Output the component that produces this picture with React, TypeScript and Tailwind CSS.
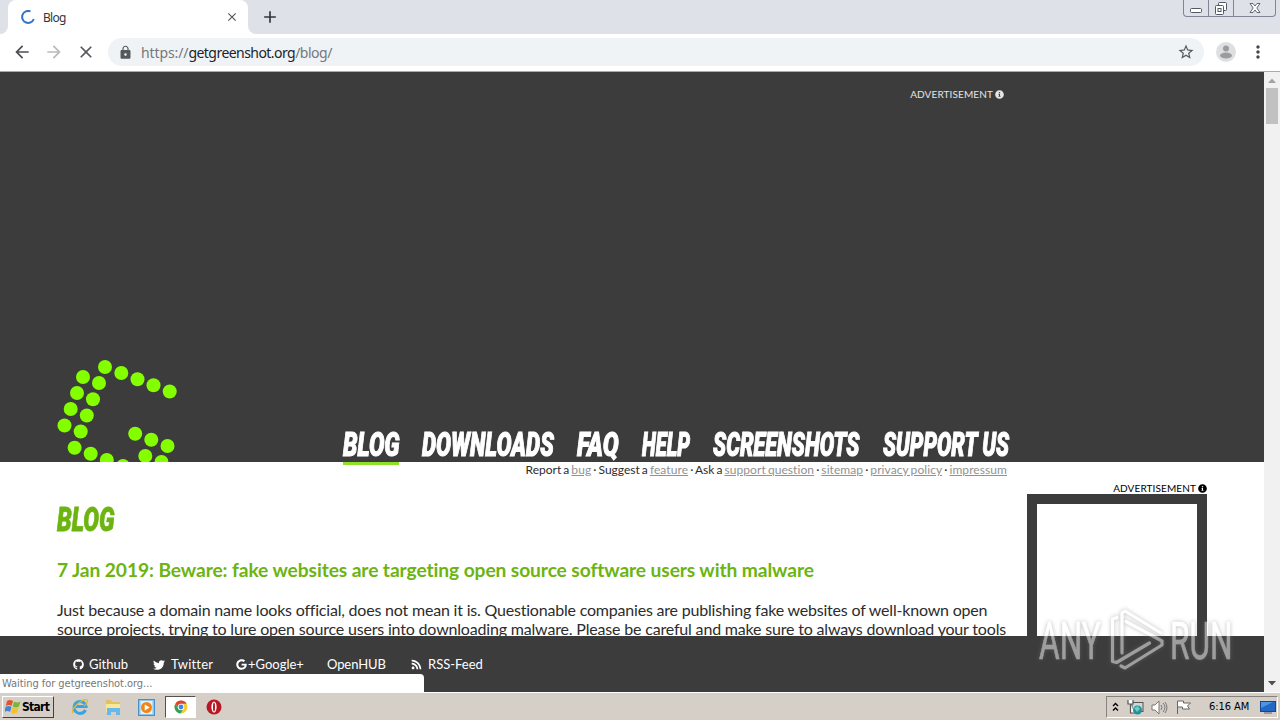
import { Fragment } from "react";
import type { ReactNode } from "react";
import {
  MdAdd,
  MdArrowBack,
  MdArrowForward,
  MdClose,
  MdLock,
  MdMoreVert,
  MdStarBorder,
} from "react-icons/md";
import { FaGithub, FaGoogle, FaInfoCircle, FaRss, FaTwitter } from "react-icons/fa";

const navItems = [
  { label: "BLOG", box: "w-[57px]", scale: "scale-x-[0.7]" },
  { label: "DOWNLOADS", box: "w-[133px]", scale: "scale-x-[0.68]" },
  { label: "FAQ", box: "w-[43px]", scale: "scale-x-[0.72]" },
  { label: "HELP", box: "w-[49px]", scale: "scale-x-[0.61]" },
  { label: "SCREENSHOTS", box: "w-[148px]", scale: "scale-x-[0.655]" },
  { label: "SUPPORT US", box: "w-[127px]", scale: "scale-x-[0.65]" },
];

const metaLinks = [
  { before: "Report a ", link: "bug" },
  { before: " · Suggest a ", link: "feature" },
  { before: " · Ask a ", link: "support question" },
  { before: " · ", link: "sitemap" },
  { before: " · ", link: "privacy policy" },
  { before: " · ", link: "impressum" },
];

const logoDots = [
  [105, 367], [121.3, 373], [137.5, 379.3], [153.5, 385.3], [169.7, 391.5],
  [83, 377], [77, 393], [70.7, 409], [64.5, 425.5],
  [99, 383], [93, 399.3], [86.8, 415.5], [80.7, 431.5],
  [74.6, 447.8], [90.7, 453.8], [106.8, 460], [123, 466],
  [135.2, 433.8], [151.3, 439.8], [167.5, 446], [145.3, 456], [161.5, 462],
];

function TabStrip() {
  return (
    <div className="flex h-[34px] bg-[#dee1e8]">
      <div className="flex w-2 items-end bg-white">
        <div className="h-full w-full rounded-br-lg bg-[#dee1e8]" />
      </div>
      <div className="flex w-60 items-center rounded-t-lg bg-white pl-[13px] pr-[9px]">
        <svg width="14" height="14" viewBox="0 0 14 14" fill="none">
          <path d="M9.5 1.4A6 6 0 1 0 12.8 9" stroke="#3474c8" strokeWidth="2" />
        </svg>
        <span className="ml-2 flex-1 pt-px text-[12px] tracking-[-0.7px] text-[#33363a]">Blog</span>
        <MdClose className="size-3.5 text-[#55585c]" />
      </div>
      <div className="w-2 bg-white">
        <div className="h-full rounded-bl-lg bg-[#dee1e8]" />
      </div>
      <MdAdd className="ml-1 mt-[7px] size-5 text-[#33363a]" />
      <div className="ml-auto mr-1 flex h-[17px] w-[93px] rounded-b-[4px] border border-t-0 border-[#808693] text-[#515967]">
        <div className="flex w-[25px] justify-center border-r border-[#808693]">
          <svg width="12" height="16" fill="none" stroke="currentColor">
            <rect x=".5" y="8.5" width="11" height="4" rx="1" fill="#fff" />
          </svg>
        </div>
        <div className="flex w-[25px] justify-center border-r border-[#808693]">
          <svg width="14" height="16" fill="none" stroke="currentColor">
            <rect x="4.5" y="2.5" width="8" height="8" rx="1" fill="#fff" />
            <rect x="1.5" y="5.5" width="8" height="9" rx="1" fill="#fff" />
            <rect x="4" y="8.5" width="3" height="3" />
          </svg>
        </div>
        <div className="flex flex-1 justify-center">
          <svg width="14" height="16">
            <path d="M2 3.5h3l2 2.5 2-2.5h3L8.8 8l3.2 4.5H9L7 10l-2 2.5H2L5.2 8z" fill="#fff" stroke="currentColor" strokeWidth=".9" />
          </svg>
        </div>
      </div>
    </div>
  );
}

function Toolbar() {
  return (
    <div className="flex h-[38px] items-center border-b border-[#a9abad] bg-white pb-px">
      <MdArrowBack className="ml-3 size-5 text-[#4b4e52]" />
      <MdArrowForward className="ml-3 size-5 text-[#b8babd]" />
      <MdClose className="ml-3 size-5 text-[#55585c]" />
      <div className="ml-3 flex h-7 w-[1096px] items-center rounded-full bg-[#f0f3f6] pl-2.5 pr-[9px]">
        <MdLock className="size-[15px] text-[#55585c]" />
        <div className="ml-2 flex-1 text-[14px] text-[#74787d]">
          <span className="tracking-[-0.1px]">https://</span>
          <span className="tracking-[-0.55px] text-[#202328]">getgreenshot.org</span>
          <span className="tracking-[-0.5px]">/blog/</span>
        </div>
        <MdStarBorder className="size-[18px] text-[#55585c]" />
      </div>
      <svg className="ml-3 size-5" viewBox="0 0 20 20">
        <circle cx="10" cy="10" r="10" fill="#dedfe0" />
        <circle cx="10" cy="6.4" r="3" fill="#9a9c9f" />
        <ellipse cx="10" cy="13.5" rx="6" ry="3" fill="#9a9c9f" />
      </svg>
      <MdMoreVert className="ml-3 size-5 text-[#44474b]" />
    </div>
  );
}

function Logo() {
  return (
    <svg className="absolute left-[57px] top-[287px]" width="122" height="103" viewBox="57 359 122 103">
      {logoDots.map(([x, y]) => (
        <circle key={`${x}-${y}`} cx={x} cy={y} r="7" fill="#84ff00" />
      ))}
    </svg>
  );
}

function SiteHeader() {
  return (
    <header className="relative flex h-[390px] flex-col bg-[#3c3c3c] text-white">
      <div className="mt-3.5 flex h-4 w-[1004px] items-center justify-end gap-0.5 self-start text-[10px] tracking-[0.12px] text-[#e5e5e5]">
        ADVERTISEMENT <FaInfoCircle className="size-[9px]" />
      </div>
      <Logo />
      <nav className="mt-auto flex h-[36px] gap-[22px] pl-[343px]">
        {navItems.map((item, i) => (
          <a
            key={item.label}
            className={`relative h-[39px] shrink-0 whitespace-nowrap ${item.box}`}
          >
            <span
              className={`inline-block origin-left font-['Roboto'] text-[33px] leading-[37px] font-black italic [-webkit-text-stroke:1.1px_currentColor] ${item.scale}`}
            >
              {item.label}
            </span>
            {i === 0 && <span className="absolute bottom-0 left-0 h-[3px] w-14 bg-[#92df27]" />}
          </a>
        ))}
      </nav>
    </header>
  );
}

function Content() {
  return (
    <main className="flex h-[174px] overflow-hidden bg-white text-[#2c2c2c]">
      <div className="w-[1007px] shrink-0 pl-[57px]">
        <p className="h-4 text-right text-[12px] leading-4 whitespace-nowrap [word-spacing:-1px]">
          {metaLinks.map((item) => (
            <Fragment key={item.link}>
              {item.before}
              <a className="tracking-[0.07px] text-[#929292] underline">{item.link}</a>
            </Fragment>
          ))}
        </p>
        <h1 className="mt-6 h-9 whitespace-nowrap">
          <span className="inline-block origin-left scale-x-[0.71] font-['Roboto'] text-[33px] leading-9 font-black text-[#6cb40f] italic [-webkit-text-stroke:0.8px_currentColor]">
            BLOG
          </span>
        </h1>
        <h2 className="mt-5 text-[19.2px] leading-6 font-bold tracking-[-0.09px] whitespace-nowrap text-[#6cb40f]">
          7 Jan 2019: Beware: fake websites are targeting open source software users with malware
        </h2>
        <p className="mt-[18px] text-[16px] leading-[19px] whitespace-nowrap">
          <span className="tracking-[-0.2px]">
            Just because a domain name looks official, does not mean it is. Questionable companies are publishing fake websites of well-known open
          </span>
          <br />
          <span className="tracking-[-0.18px]">
            source projects, trying to lure open source users into downloading malware. Please be careful and make sure to always download your tools
          </span>
        </p>
      </div>
      <aside className="ml-5 w-[180px] pt-[21px]">
        <div className="flex h-[11px] items-center justify-end gap-0.5 text-[10px] tracking-[0.12px] text-black">
          ADVERTISEMENT <FaInfoCircle className="size-[9px]" />
        </div>
        <div className="h-[300px] border-10 border-[#3c3c3c]" />
      </aside>
    </main>
  );
}

function FooterLink({ children, className }: { children: ReactNode; className: string }) {
  return <a className={`flex shrink-0 items-center whitespace-nowrap ${className}`}>{children}</a>;
}

function SiteFooter() {
  return (
    <footer className="relative flex h-14 bg-[#3c3c3c] pl-[73px] text-[13px] text-white">
      <div className="flex h-[57px] items-center">
        <FooterLink className="w-20 gap-[5px]"><FaGithub className="size-[11px]" />Github</FooterLink>
        <FooterLink className="w-[83px] gap-1.5 tracking-[0.2px]"><FaTwitter className="size-3" />Twitter</FooterLink>
        <FooterLink className="w-[91px]"><FaGoogle className="mr-px size-[11px]" />+Google+</FooterLink>
        <FooterLink className="w-[84px] tracking-[-0.1px]">OpenHUB</FooterLink>
        <FooterLink className="gap-1.5"><FaRss className="size-[11px]" />RSS-Feed</FooterLink>
      </div>
      <div className="absolute bottom-0 left-0 h-[18px] w-[424px] rounded-tr bg-white pl-0.5 font-['DejaVu_Sans_Condensed','DejaVu_Sans',sans-serif] text-[11px] leading-[19px] tracking-[-0.05px] text-[#777]">
        Waiting for getgreenshot.org...
      </div>
    </footer>
  );
}

function Scrollbar() {
  return (
    <div className="flex w-4 flex-col items-center bg-[#f1f1f1]">
      <svg width="16" height="16"><path d="M4 11h8L8 6.5z" fill="#a3a3a3" /></svg>
      <div className="h-9 w-3 bg-[#c1c1c1]" />
      <svg className="mt-auto" width="16" height="18"><path d="M4 7h8l-4 4.5z" fill="#505050" /></svg>
    </div>
  );
}

function Watermark() {
  return (
    <div className="absolute left-[1039px] top-[608px] flex h-[68px] w-[194px] items-center text-white opacity-50 drop-shadow-[0_0_2px_#777]">
      <div className="w-[68px]">
        <span className="inline-block origin-left scale-x-[0.62] font-['Roboto'] text-[51px] leading-[68px] [-webkit-text-stroke:0.6px_currentColor]">ANY</span>
      </div>
      <svg className="-mt-1 shrink-0" width="60" height="68" fill="none" stroke="currentColor" strokeWidth="3.2" strokeLinejoin="round" strokeLinecap="round">
        <path d="M10 11.500L5.500 13v42.500l4 1L42.500 37" />
        <path d="M15 47V7l3-2L54 27" />
        <path d="M19 15.500L55 35v4L18 62l-4-2" />
      </svg>
      <div className="w-16 pl-[3px]">
        <span className="inline-block origin-left scale-x-[0.62] font-['Roboto'] text-[51px] leading-[68px] [-webkit-text-stroke:0.6px_currentColor]">RUN</span>
      </div>
    </div>
  );
}

function WindowsFlag() {
  return (
    <svg width="16" height="16" viewBox="0 0 16 16">
      <path d="M2 2q3-2 6 0L6.5 7Q4 5 .8 7z" fill="#e6532b" />
      <path d="M9 2.5q3 2 6.5 0L14 7.5q-3 2-6.3 0z" fill="#77b736" />
      <path d="M.5 8q3-2 6 0L5 13q-2.500-2-5.500 0z" fill="#4384d5" />
      <path d="M7.500 8.500q3 2 6.200 0l-1.500 5q-3 2-6.200 0z" fill="#f4c12a" />
    </svg>
  );
}

function QuickLaunch() {
  return (
    <div className="flex items-center">
      <svg className="ml-[17px]" width="18" height="18" viewBox="0 0 18 18" fill="none">
        <path d="M14.500 12A6 6 0 1 1 15 8.500H5" stroke="#37a5e4" strokeWidth="3" />
        <path d="M2 15C-1 11 12 0 16 2q2 2-3 6" stroke="#e6b82b" strokeWidth="1.300" />
      </svg>
      <svg className="ml-[15px]" width="18" height="18" viewBox="0 0 18 18">
        <path d="M2 2h5l1 2h8v9H2z" fill="#dfc262" />
        <path d="M2 6h14v8H2z" fill="#f9e798" />
        <path d="M3 17v-7h13v7h-4v-3H7v3z" fill="#66b9e8" />
      </svg>
      <svg className="ml-4" width="17" height="17" viewBox="0 0 17 17">
        <rect x=".500" y=".500" width="16" height="16" fill="#8ac4ed" stroke="#4a8fc7" />
        <rect x="2.500" y="2" width="12" height="13" fill="#e4f2fb" />
        <circle cx="8.500" cy="8.500" r="5.500" fill="#ee8618" />
        <path d="M6.700 5.500v6l5-3z" fill="#fff" />
      </svg>
      <div className="ml-2.5 flex h-[22px] w-[31px] items-center justify-center border border-r-white border-b-white border-t-[#55524e] border-l-[#55524e] bg-white">
        <svg width="14" height="14" viewBox="0 0 14 14">
          <circle cx="7" cy="7" r="6.500" fill="#f8cc32" />
          <path d="M1.400 3.700A6.500 6.500 0 0 1 12.600 3.700H7L4.500 8z" fill="#dc4437" />
          <path d="M1.400 3.700A6.500 6.500 0 0 0 6.600 13.500L9.500 8.500 4.500 9z" fill="#34a057" />
          <circle cx="7" cy="7" r="3.200" fill="#fff" />
          <circle cx="7" cy="7" r="2.400" fill="#4384ec" />
        </svg>
      </div>
      <svg className="ml-[10px]" width="16" height="16" viewBox="0 0 16 16">
        <circle cx="8" cy="8" r="7.500" fill="#b81824" />
        <ellipse cx="8" cy="8" rx="2.600" ry="5.500" fill="#fff" />
        <ellipse cx="8" cy="8" rx="1" ry="4.500" fill="#b81824" />
      </svg>
    </div>
  );
}

function Taskbar() {
  return (
    <div className="flex h-7 items-center border-t border-white bg-[#d5cfc7] pt-px pl-0.5 font-['DejaVu_Sans_Condensed','DejaVu_Sans',sans-serif]">
      <div className="flex h-[22px] w-[52px] items-center border border-t-white border-l-white border-r-[#404040] border-b-[#404040] pl-0.5 text-[12px] font-bold tracking-[-0.700px] text-black">
        <WindowsFlag />
        <span className="ml-px">Start</span>
      </div>
      <QuickLaunch />
      <div className="mr-0.5 ml-auto flex h-[22px] w-[172px] items-center border border-t-[#86827d] border-l-[#86827d] border-r-white border-b-white pl-[5px]">
        <svg width="7" height="10" fill="none" stroke="#000" strokeWidth="1.400"><path d="M1 4l2.500-2.500L6 4M1 8.500L3.500 6 6 8.500" /></svg>
        <svg className="ml-2" width="17" height="17" viewBox="0 0 17 17">
          <rect x="5" y="3.500" width="11" height="9" fill="#cfd8d8" stroke="#555" />
          <path d="M1 1v4h5V1M3.500 5v9h4" stroke="#555" strokeWidth="1.200" fill="#fff" />
          <circle cx="10.500" cy="11" r="4.500" fill="#26909a" />
          <path d="M7 9l4-2 2 3-3 3z" fill="#6bcfc0" />
        </svg>
        <svg className="ml-[7px]" width="17" height="15" fill="none" stroke="#777">
          <path d="M1 5h3l4-4v13l-4-4H1z" fill="#fff" /><path d="M10 5q2 2.500 0 5M12 3q4 4.500 0 9M14 2q4 5.500 0 11" />
        </svg>
        <svg className="ml-[7px]" width="17" height="16" fill="#fff" stroke="#666"><path d="M2.500 15V2h6v2h7l-3 3 2 3h-7V8h-5" /></svg>
        <span className="ml-[17px] text-[11px] tracking-[-0.050px] whitespace-nowrap text-black">6:16 AM</span>
        <svg className="ml-auto mr-px" width="16" height="14">
          <rect x=".500" y="1.500" width="15" height="10" fill="#2468c7" stroke="#16468b" />
          <path d="M1 2h12L1 8z" fill="#4e94e5" /><path d="M4 12h8v2H4z" fill="#999" />
        </svg>
      </div>
    </div>
  );
}

export default function App() {
  return (
    <div className="relative flex h-[720px] w-[1280px] flex-col overflow-hidden bg-white font-['Noto_Sans',sans-serif]">
      <TabStrip />
      <Toolbar />
      <div className="flex h-[620px]">
        <div className="w-[1264px] font-['Lato',sans-serif]">
          <SiteHeader />
          <Content />
          <SiteFooter />
        </div>
        <Scrollbar />
      </div>
      <Taskbar />
      <Watermark />
    </div>
  );
}
